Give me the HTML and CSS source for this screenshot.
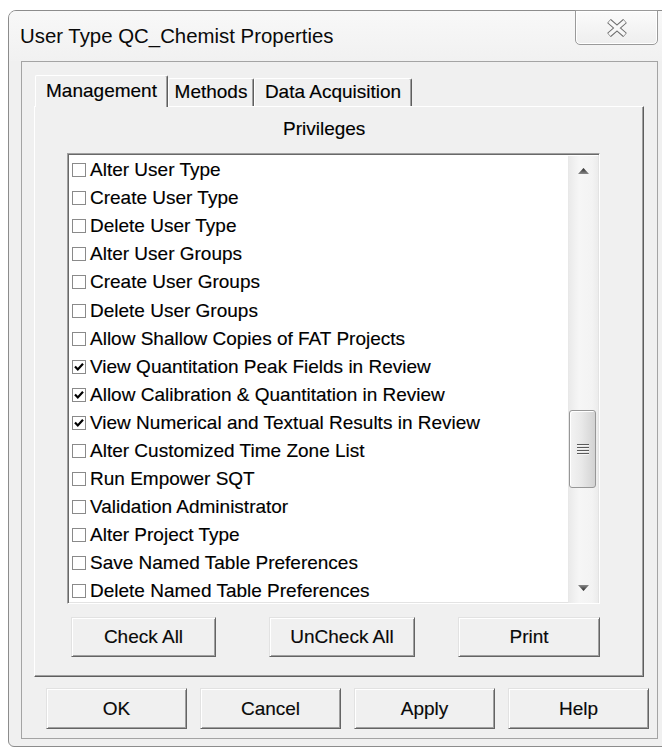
FILE: index.html
```html
<!DOCTYPE html>
<html lang="en">
<head>
<meta charset="utf-8">
<title>User Type QC_Chemist Properties</title>
<link rel="stylesheet" href="styles.css">
</head>
<body>
<div class="window">
  <div class="titlebar">
    <div class="title">User Type QC_Chemist Properties</div>
    <div class="close" aria-label="Close">
      <svg width="22" height="18" viewBox="0 0 22 18">
        <g stroke-linecap="butt">
          <path d="M3 2 L19 16 M19 2 L3 16" stroke="#6c6c6c" stroke-width="5.6"/>
          <path d="M3.3 2.4 L18.7 15.6 M18.7 2.4 L3.3 15.6" stroke="#f7f7f7" stroke-width="3.4"/>
        </g>
      </svg>
    </div>
  </div>

  <div class="client">
    <div class="tabs">
      <div class="tab tab-active tab-management">Management</div>
      <div class="tab tab-methods">Methods</div>
      <div class="tab tab-acq">Data Acquisition</div>
    </div>

    <div class="page">
      <div class="group-label">Privileges</div>

      <div class="listbox">
        <div class="items">
          <div class="item"><span class="box"></span>Alter User Type</div>
          <div class="item"><span class="box"></span>Create User Type</div>
          <div class="item"><span class="box"></span>Delete User Type</div>
          <div class="item"><span class="box"></span>Alter User Groups</div>
          <div class="item"><span class="box"></span>Create User Groups</div>
          <div class="item"><span class="box"></span>Delete User Groups</div>
          <div class="item"><span class="box"></span>Allow Shallow Copies of FAT Projects</div>
          <div class="item"><span class="box"><svg class="tick" width="12" height="12" viewBox="0 0 12 12"><path d="M2 5.5 L4.8 8.5 L10 2.8" fill="none" stroke="#000" stroke-width="2.2"/></svg></span>View Quantitation Peak Fields in Review</div>
          <div class="item"><span class="box"><svg class="tick" width="12" height="12" viewBox="0 0 12 12"><path d="M2 5.5 L4.8 8.5 L10 2.8" fill="none" stroke="#000" stroke-width="2.2"/></svg></span>Allow Calibration &amp; Quantitation in Review</div>
          <div class="item"><span class="box"><svg class="tick" width="12" height="12" viewBox="0 0 12 12"><path d="M2 5.5 L4.8 8.5 L10 2.8" fill="none" stroke="#000" stroke-width="2.2"/></svg></span>View Numerical and Textual Results in Review</div>
          <div class="item"><span class="box"></span>Alter Customized Time Zone List</div>
          <div class="item"><span class="box"></span>Run Empower SQT</div>
          <div class="item"><span class="box"></span>Validation Administrator</div>
          <div class="item"><span class="box"></span>Alter Project Type</div>
          <div class="item"><span class="box"></span>Save Named Table Preferences</div>
          <div class="item"><span class="box"></span>Delete Named Table Preferences</div>
        </div>

        <div class="scrollbar">
          <div class="sb-arrow">
            <svg width="11" height="6" viewBox="0 0 11 6"><defs><linearGradient id="up" x1="0" y1="0" x2="0" y2="1"><stop offset="0" stop-color="#2a2a2a"/><stop offset="1" stop-color="#8a8a8a"/></linearGradient></defs><polygon points="5.5,0 11,6 0,6" fill="url(#up)"/></svg>
          </div>
          <div class="sb-before"></div>
          <div class="sb-thumb">
            <span class="grip"></span><span class="grip"></span><span class="grip"></span><span class="grip"></span>
          </div>
          <div class="sb-after"></div>
          <div class="sb-arrow">
            <svg width="11" height="6" viewBox="0 0 11 6"><defs><linearGradient id="dn" x1="0" y1="0" x2="0" y2="1"><stop offset="0" stop-color="#8a8a8a"/><stop offset="1" stop-color="#2a2a2a"/></linearGradient></defs><polygon points="0,0 11,0 5.5,6" fill="url(#dn)"/></svg>
          </div>
        </div>
      </div>

      <div class="page-buttons">
        <button class="btn btn-check">Check All</button>
        <button class="btn btn-uncheck">UnCheck All</button>
        <button class="btn btn-print">Print</button>
      </div>
    </div>

    <div class="dialog-buttons">
      <button class="btn btn-dlg">OK</button>
      <button class="btn btn-dlg">Cancel</button>
      <button class="btn btn-dlg">Apply</button>
      <button class="btn btn-dlg">Help</button>
    </div>
  </div>
</div>
</body>
</html>
```

FILE: styles.css
```css
* {
  box-sizing: border-box;
}

html,
body {
  margin: 0;
}

body {
  width: 662px;
  height: 748px;
  overflow: hidden;
  background: #ffffff;
  font-family: "Liberation Sans", Arial, sans-serif;
  color: #000;
}

/* outer window frame */
.window {
  margin: 10px 0 0 8px;
  width: 664px;
  height: 737px;
  border: 1px solid #8c8c8c;
  border-radius: 8px 8px 0 6px;
  background: #f0f0f0;
  display: flex;
  flex-direction: column;
}

.titlebar {
  height: 50px;
  display: flex;
  align-items: flex-start;
  background: linear-gradient(#f8f8f8, #f1f1f1);
  border-radius: 7px 7px 0 0;
}

.title {
  flex: 0 0 566px;
  padding: 13px 0 0 11px;
  font-size: 20.4px;
  line-height: 24px;
  color: #0a0a0a;
}

.close {
  margin-top: -1px;
  width: 83px;
  height: 35px;
  border: 1px solid #9a9a9a;
  border-radius: 0 0 5px 5px;
  background: linear-gradient(#fbfbfb, #eeeeee);
  box-shadow: inset 0 0 0 1px #ffffff;
  display: flex;
  align-items: center;
  justify-content: center;
}

.close svg {
  display: block;
}

/* dialog client area */
.client {
  margin-left: 12px;
  width: 637px;
  height: 678px;
  border: 1px solid #a4a4a4;
  background: #f0f0f0;
  display: flex;
  flex-direction: column;
}

/* tab strip */
.tabs {
  display: flex;
  align-items: flex-end;
  height: 31px;
  margin: 13px 0 0 13px;
  position: relative;
  z-index: 1;
}

.tab {
  height: 28px;
  font-size: 19px;
  line-height: 26px;
  text-align: center;
  background: #f0f0f0;
  border-top: 1px solid #ffffff;
  border-left: 1px solid #ffffff;
  border-right: 1px solid #5e5e5e;
  border-radius: 2px 2px 0 0;
  box-shadow: inset -1px 0 #a0a0a0;
  -webkit-text-stroke: 0.15px #000;
}

.tab-active {
  height: 32px;
  margin-bottom: -1px;
  line-height: 30px;
}

.tab-management {
  width: 133px;
}

.tab-methods {
  width: 86px;
}

.tab-acq {
  width: 158px;
}

/* tab page */
.page {
  margin-left: 12px;
  width: 610px;
  height: 571px;
  border: 1px solid;
  border-color: #ffffff #5e5e5e #5e5e5e #ffffff;
  box-shadow: inset -1px -1px #a0a0a0;
  display: flex;
  flex-direction: column;
}

.group-label {
  margin: 11px 0 0 248px;
  font-size: 19px;
  line-height: 22px;
  -webkit-text-stroke: 0.15px #000;
}

/* privileges list */
.listbox {
  margin: 13px 0 0 32px;
  width: 533px;
  height: 451px;
  border: 1px solid;
  border-color: #a0a0a0 #ffffff #ffffff #a0a0a0;
  box-shadow: inset 1px 1px #696969, inset -1px -1px #e3e3e3;
  background: #ffffff;
  display: flex;
  padding: 1px 1px 0 1px;
}

.items {
  flex: 1;
  overflow: hidden;
  padding-top: 1px;
}

.item {
  height: 28.1px;
  display: flex;
  align-items: center;
  padding-left: 3px;
  font-size: 19px;
  white-space: nowrap;
  -webkit-text-stroke: 0.15px #000;
}

.box {
  flex: 0 0 14px;
  width: 14px;
  height: 14px;
  margin-right: 4px;
  border: 1px solid #8a8a8a;
  background: #ffffff;
  display: flex;
  align-items: center;
  justify-content: center;
}

.tick {
  display: block;
}

/* vertical scrollbar */
.scrollbar {
  flex: 0 0 30px;
  display: flex;
  flex-direction: column;
  margin-top: 1px;
  border-left: 1px solid #e8e8e8;
  background: linear-gradient(90deg, #eaeaea, #f6f6f6 35%, #f3f3f3 80%, #ececec);
}

.sb-arrow {
  height: 30px;
  display: flex;
  align-items: center;
  justify-content: center;
}

.sb-arrow svg {
  display: block;
}

.sb-before {
  height: 224px;
}

.sb-thumb {
  height: 78px;
  width: 27px;
  border: 1px solid #979797;
  border-radius: 3px;
  background: linear-gradient(90deg, #f3f3f3, #e9e9e9 45%, #d9d9d9 85%, #d2d2d2);
  box-shadow: inset 1px 1px #ffffff;
  display: flex;
  flex-direction: column;
  align-items: center;
  justify-content: center;
  gap: 1px;
}

.grip {
  width: 12px;
  height: 2px;
  border-top: 1px solid #5a5a5a;
  border-bottom: 1px solid #f4f4f4;
}

.sb-after {
  flex: 1;
}

/* push buttons */
.btn {
  font-family: "Liberation Sans", Arial, sans-serif;
  font-size: 19px;
  color: #0a0a0a;
  background: #f0f0f0;
  border: 1px solid;
  border-color: #e2e2e2 #646464 #646464 #e2e2e2;
  box-shadow: inset 1px 1px #ffffff, inset -1px -1px #a0a0a0;
  padding: 0;
  margin: 0;
  -webkit-text-stroke: 0.15px #000;
}

.page-buttons {
  display: flex;
  margin: 13px 0 0 36px;
}

.btn-check {
  width: 145px;
  height: 40px;
}

.btn-uncheck {
  width: 146px;
  height: 40px;
  margin: 0 43px 0 53px;
}

.btn-print {
  width: 142px;
  height: 40px;
}

.dialog-buttons {
  display: flex;
  gap: 13px;
  margin: 11px 0 0 24px;
}

.btn-dlg {
  width: 141px;
  height: 41px;
}
```
